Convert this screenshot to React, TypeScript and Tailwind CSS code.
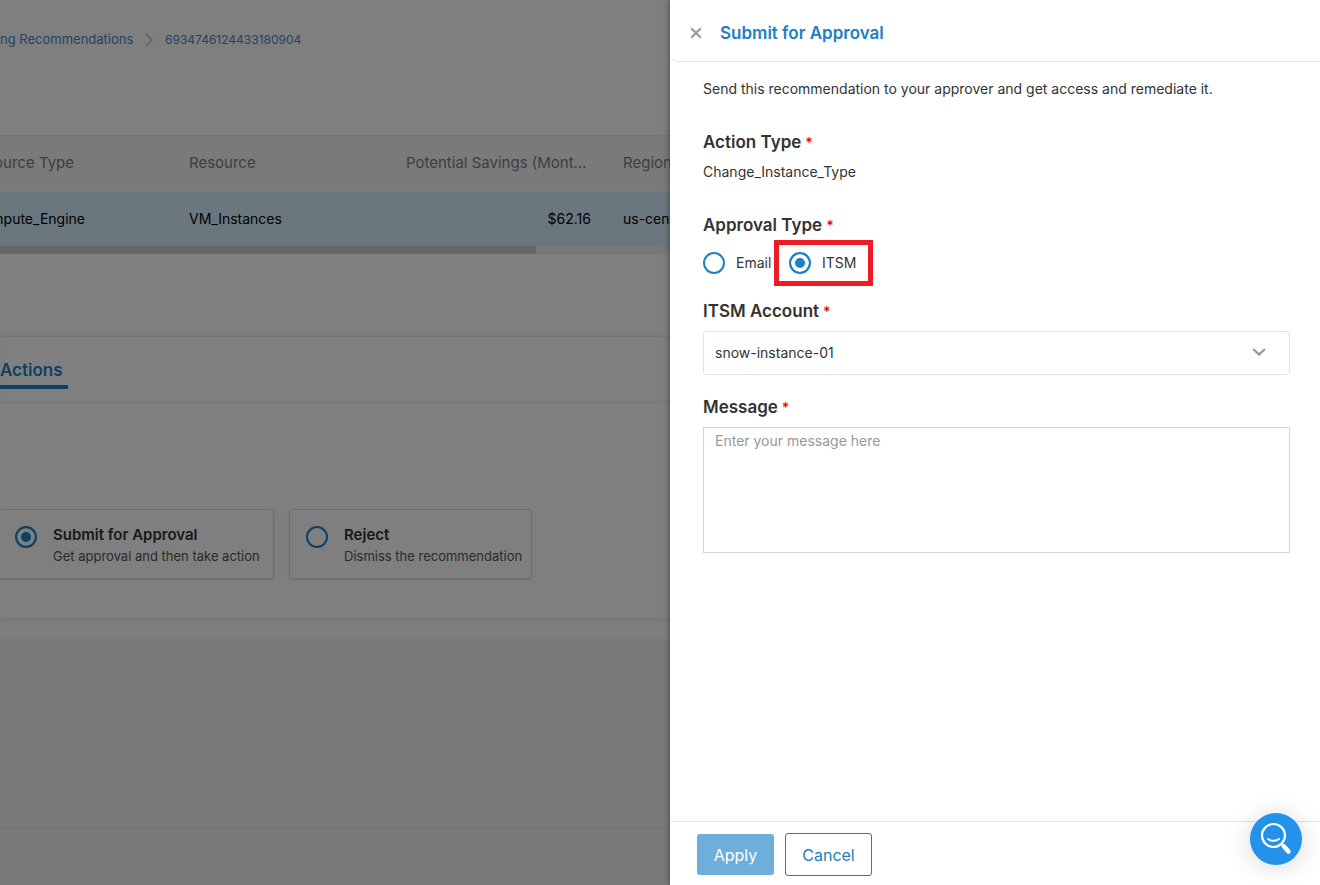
import React, { useState } from 'react';

type ActionId = 'approval' | 'reject';
type ApprovalType = 'email' | 'itsm';

const radioClass =
  'size-[22px] shrink-0 appearance-none rounded-full border-2 border-[#1b80c4] bg-white checked:bg-[#1b80c4] checked:shadow-[inset_0_0_0_4px_#fff]';

const ACTIONS: { id: ActionId; title: string; text: string; box: string }[] = [
  { id: 'approval', title: 'Submit for Approval', text: 'Get approval and then take action', box: 'w-[276px] -ml-0.5' },
  { id: 'reject', title: 'Reject', text: 'Dismiss the recommendation', box: 'w-[243px]' },
];

const Required = () => <span className="ml-1 text-sm text-[#ff0000]">*</span>;

const Breadcrumb = () => (
  <nav aria-label="Breadcrumb" className="flex h-20 items-center text-[13px] text-[#4a83cc]">
    <a href="#recommendations" className="w-[133px] whitespace-nowrap">
      ng Recommendations
    </a>
    <svg viewBox="0 0 8 14" className="mx-3 h-[14px] w-2" fill="none" stroke="#a3b9dc" strokeWidth="1.3">
      <path d="M1 1l6 6-6 6" />
    </svg>
    <a href="#recommendation" className="text-xs">6934746124433180904</a>
  </nav>
);

const ResourceTable = () => (
  <div>
    <table className="w-full table-fixed border-collapse text-left whitespace-nowrap">
      <colgroup>
        <col className="w-[173px]" />
        <col className="w-[217px]" />
        <col className="w-[217px]" />
        <col />
      </colgroup>
      <thead>
        <tr className="h-14 border-t border-b border-t-[#e8e8e8] border-b-[#fafafa] bg-[#f4f4f4] text-[15px] text-[#7d7d7d]">
          <th className="p-0 font-normal">
            <span className="flex w-[74px] justify-end">ource Type</span>
          </th>
          <th className="px-4 font-normal">Resource</th>
          <th className="truncate px-4 font-normal">Potential Savings (Monthly)</th>
          <th className="px-4 font-normal">Region</th>
        </tr>
      </thead>
      <tbody>
        <tr className="h-[54px] bg-[#d5effe] text-sm text-black">
          <td className="p-0">
            <span className="flex w-[85px] justify-end">mpute_Engine</span>
          </td>
          <td className="px-4">VM_Instances</td>
          <td className="px-4 text-right">$62.16</td>
          <td className="px-4">us-central1</td>
        </tr>
      </tbody>
    </table>
    <div className="h-2 bg-[#f0f0f0]">
      <div className="h-2 w-[536px] bg-[#cccccc]" />
    </div>
  </div>
);

export default function App() {
  const [action, setAction] = useState<ActionId>('approval');
  const [approvalType, setApprovalType] = useState<ApprovalType>('itsm');
  const [account, setAccount] = useState('snow-instance-01');
  const [message, setMessage] = useState('');

  return (
    <div className="relative min-h-screen overflow-hidden bg-[#f2f4f7] font-['Inter',sans-serif] text-[#333333]">
      {/* Recommendation page */}
      <main className="flex min-h-screen flex-col">
        <div className="bg-white pb-[21px]">
          <Breadcrumb />
          <div className="pt-[55px] pb-[82px]">
            <ResourceTable />
          </div>

          <section className="border-t border-[#ececec] shadow-[0_2px_8px_rgba(0,0,0,0.1)]">
            <div className="flex h-[67px] border-b border-[#f3f3f3] shadow-[inset_0_-3px_3px_rgba(0,0,0,0.03)]">
              <button className="mt-4 h-9 border-b-4 border-[#1b80c4] pt-1 pr-[5px] text-[17px] font-semibold text-[#1b80c4]">
                Actions
              </button>
            </div>
            <div className="flex gap-[15px] pt-[105px] pb-[39px]">
              {ACTIONS.map(item => (
                <label
                  key={item.id}
                  className={`flex h-[70px] gap-4 rounded-[3px] border border-[#dadada] bg-white px-4 py-4 whitespace-nowrap shadow-sm ${item.box}`}
                >
                  <input
                    type="radio"
                    name="action"
                    checked={action === item.id}
                    onChange={() => setAction(item.id)}
                    className={radioClass}
                  />
                  <span>
                    <span className="block text-[15px] leading-[18px] font-semibold">{item.title}</span>
                    <span className="mt-[3px] block text-[13px] leading-[18px] text-[#555555]">{item.text}</span>
                  </span>
                </label>
              ))}
            </div>
          </section>
        </div>

        <div className="flex-1" />
        <div className="h-[58px] border-t border-[#dfe1e5]" />
      </main>

      <div className="absolute inset-0 bg-black/50" />

      {/* Approval drawer */}
      <aside className="absolute inset-y-0 right-0 flex w-[650px] max-w-full flex-col bg-white shadow-[0_0_6px_rgba(0,0,0,0.5)]">
        <header className="flex h-[62px] shrink-0 items-center gap-[18px] rounded-bl-lg border-b border-[#e2e2e2] px-5 pt-1">
          <button aria-label="Close" className="text-[#9b9b9b]">
            <svg viewBox="0 0 12 12" className="size-3" fill="none" stroke="currentColor" strokeWidth="2.2">
              <path d="M1.2 1.2l9.6 9.6M10.8 1.2l-9.6 9.6" />
            </svg>
          </button>
          <h2 className="text-[17px] leading-6 font-semibold text-[#1b80c4]">Submit for Approval</h2>
        </header>

        <form id="approval-form" className="flex-1 pt-[17px] pr-[30px] pb-6 pl-[33px] text-sm" onSubmit={e => e.preventDefault()}>
          <p className="leading-5">Send this recommendation to your approver and get access and remediate it.</p>

          <h3 className="mt-[31px] text-[17px] leading-6 font-semibold">Action Type<Required /></h3>
          <p className="mt-2 leading-5">Change_Instance_Type</p>

          <fieldset className="mt-[31px]">
            <legend className="text-[17px] leading-6 font-semibold">Approval Type<Required /></legend>
            <div className="mt-[3px] flex h-[46px] items-center">
              <label className="flex w-[71px] items-center gap-[11px]">
                <input
                  type="radio"
                  name="approval-type"
                  checked={approvalType === 'email'}
                  onChange={() => setApprovalType('email')}
                  className={radioClass}
                />
                Email
              </label>
              <label className="flex h-[46px] w-[99px] items-center gap-[11px] border-5 border-[#ed1c24] pl-[10px]">
                <input
                  type="radio"
                  name="approval-type"
                  checked={approvalType === 'itsm'}
                  onChange={() => setApprovalType('itsm')}
                  className={radioClass}
                />
                ITSM
              </label>
            </div>
          </fieldset>

          <label htmlFor="account" className="mt-[13px] block text-[17px] leading-6 font-semibold">
            ITSM Account<Required />
          </label>
          <div className="relative mt-2">
            <select
              id="account"
              value={account}
              onChange={e => setAccount(e.target.value)}
              className="h-11 w-full appearance-none rounded-[3px] border border-[#e2e2e2] bg-white px-[11px]"
            >
              <option>snow-instance-01</option>
            </select>
            <svg
              viewBox="0 0 14 8"
              className="pointer-events-none absolute top-[17px] right-6 h-2 w-[14px]"
              fill="none"
              stroke="#999999"
              strokeWidth="2.2"
            >
              <path d="M1 1l6 5.4L13 1" />
            </svg>
          </div>

          <label htmlFor="message" className="mt-5 block text-[17px] leading-6 font-semibold">
            Message<Required />
          </label>
          <textarea
            id="message"
            value={message}
            onChange={e => setMessage(e.target.value)}
            placeholder="Enter your message here"
            className="mt-2 block h-[126px] w-full resize-none border border-[#d6d6d6] px-[11px] py-[3px] leading-5 placeholder:text-[#999999]"
          />
        </form>

        <footer className="flex h-16 shrink-0 items-center gap-[11px] border-t border-[#e6e6e6] px-[27px] pt-0.5">
          <button type="submit" form="approval-form" className="h-[41px] w-[77px] rounded-[3px] bg-[#6daeda] text-base text-white">
            Apply
          </button>
          <button type="button" className="h-[43px] w-[87px] rounded-[3px] border border-[#1b80c4] text-base text-[#1b80c4]">
            Cancel
          </button>
        </footer>
      </aside>

      {/* Floating help search */}
      <button
        aria-label="Search help"
        className="absolute right-[18px] bottom-5 flex size-[52px] items-center justify-center rounded-full bg-[#2491eb] shadow-[0_2px_24px_rgba(0,0,0,0.16)]"
      >
        <svg viewBox="0 0 52 52" className="size-[52px]" fill="none" stroke="#fff" strokeLinecap="round">
          <circle cx="23.5" cy="22.5" r="11.5" strokeWidth="2.2" />
          <path d="M18 26c3 2.4 8 2.4 11 0" strokeWidth="1.9" />
          <path d="M31.5 31l2.5 2.5" strokeWidth="2.4" />
          <path d="M34 33.500l4.500 5" strokeWidth="4.500" />
        </svg>
      </button>
    </div>
  );
}
